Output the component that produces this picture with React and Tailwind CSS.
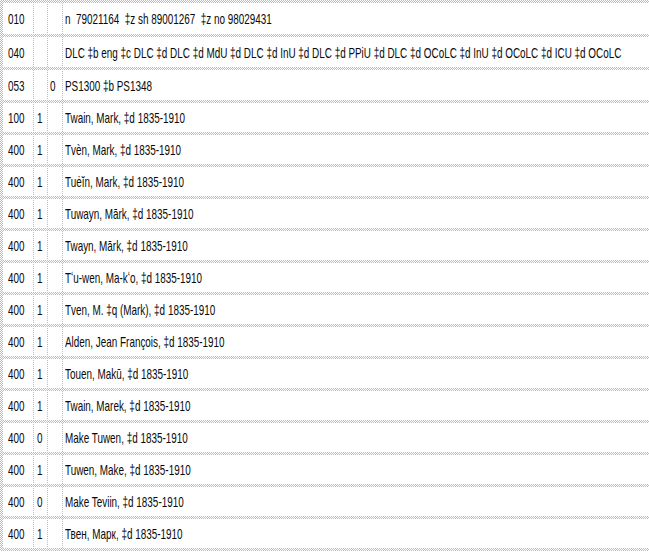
const rows = [
  { tag: "010", i1: "", i2: "", data: "n  79021164  \u2021z sh 89001267  \u2021z no 98029431", h: "h-[31px]" },
  { tag: "040", i1: "", i2: "", data: "DLC \u2021b eng \u2021c DLC \u2021d DLC \u2021d MdU \u2021d DLC \u2021d InU \u2021d DLC \u2021d PPiU \u2021d DLC \u2021d OCoLC \u2021d InU \u2021d OCoLC \u2021d ICU \u2021d OCoLC", h: "h-[30px]" },
  { tag: "053", i1: "", i2: "0", data: "PS1300 \u2021b PS1348", h: "h-[30px]" },
  { tag: "100", i1: "1", i2: "", data: "Twain, Mark, \u2021d 1835-1910" },
  { tag: "400", i1: "1", i2: "", data: "Tvèn, Mark, \u2021d 1835-1910" },
  { tag: "400", i1: "1", i2: "", data: "Tuėĭn, Mark, \u2021d 1835-1910" },
  { tag: "400", i1: "1", i2: "", data: "Tuwayn, Mārk, \u2021d 1835-1910" },
  { tag: "400", i1: "1", i2: "", data: "Twayn, Mārk, \u2021d 1835-1910" },
  { tag: "400", i1: "1", i2: "", data: "Tʻu-wen, Ma-kʻo, \u2021d 1835-1910" },
  { tag: "400", i1: "1", i2: "", data: "Tven, M. \u2021q (Mark), \u2021d 1835-1910" },
  { tag: "400", i1: "1", i2: "", data: "Alden, Jean François, \u2021d 1835-1910" },
  { tag: "400", i1: "1", i2: "", data: "Touen, Makū, \u2021d 1835-1910" },
  { tag: "400", i1: "1", i2: "", data: "Twain, Marek, \u2021d 1835-1910" },
  { tag: "400", i1: "0", i2: "", data: "Make Tuwen, \u2021d 1835-1910" },
  { tag: "400", i1: "1", i2: "", data: "Tuwen, Make, \u2021d 1835-1910" },
  { tag: "400", i1: "0", i2: "", data: "Make Teviin, \u2021d 1835-1910" },
  { tag: "400", i1: "1", i2: "", data: "Твен, Марк, \u2021d 1835-1910" },
];

function Txt({ children }) {
  return (
    <span className="inline-block origin-left scale-x-[0.66] whitespace-pre text-[15px] leading-none">
      {children}
    </span>
  );
}

function Cell({ children, pad }) {
  return (
    <div className={`flex items-center overflow-hidden bg-white ${pad}`}>
      <Txt>{children}</Txt>
    </div>
  );
}

export default function App() {
  return (
    <div className="h-[554px] w-[649px] overflow-hidden bg-white font-['Liberation_Sans',Arial,sans-serif] text-[#0a0a0a]">
      <div className="flex w-[680px] flex-col gap-y-[3px] bg-[image:repeating-conic-gradient(#bdbdbd_0_25%,#ffffff_0_50%)] bg-[length:2px_2px] bg-size-[2px_2px] py-[3px] pl-[3px]">
        {rows.map((r, i) => (
          <div key={i} className={`grid grid-cols-[30px_13px_14px_1fr] gap-x-px ${r.h || "h-[29px]"}`}>
            <Cell pad="pl-[5px]">{r.tag}</Cell>
            <Cell pad="pl-[3px]">{r.i1}</Cell>
            <Cell pad="pl-[2px]">{r.i2}</Cell>
            <Cell pad="pl-[2px]">{r.data}</Cell>
          </div>
        ))}
      </div>
    </div>
  );
}
